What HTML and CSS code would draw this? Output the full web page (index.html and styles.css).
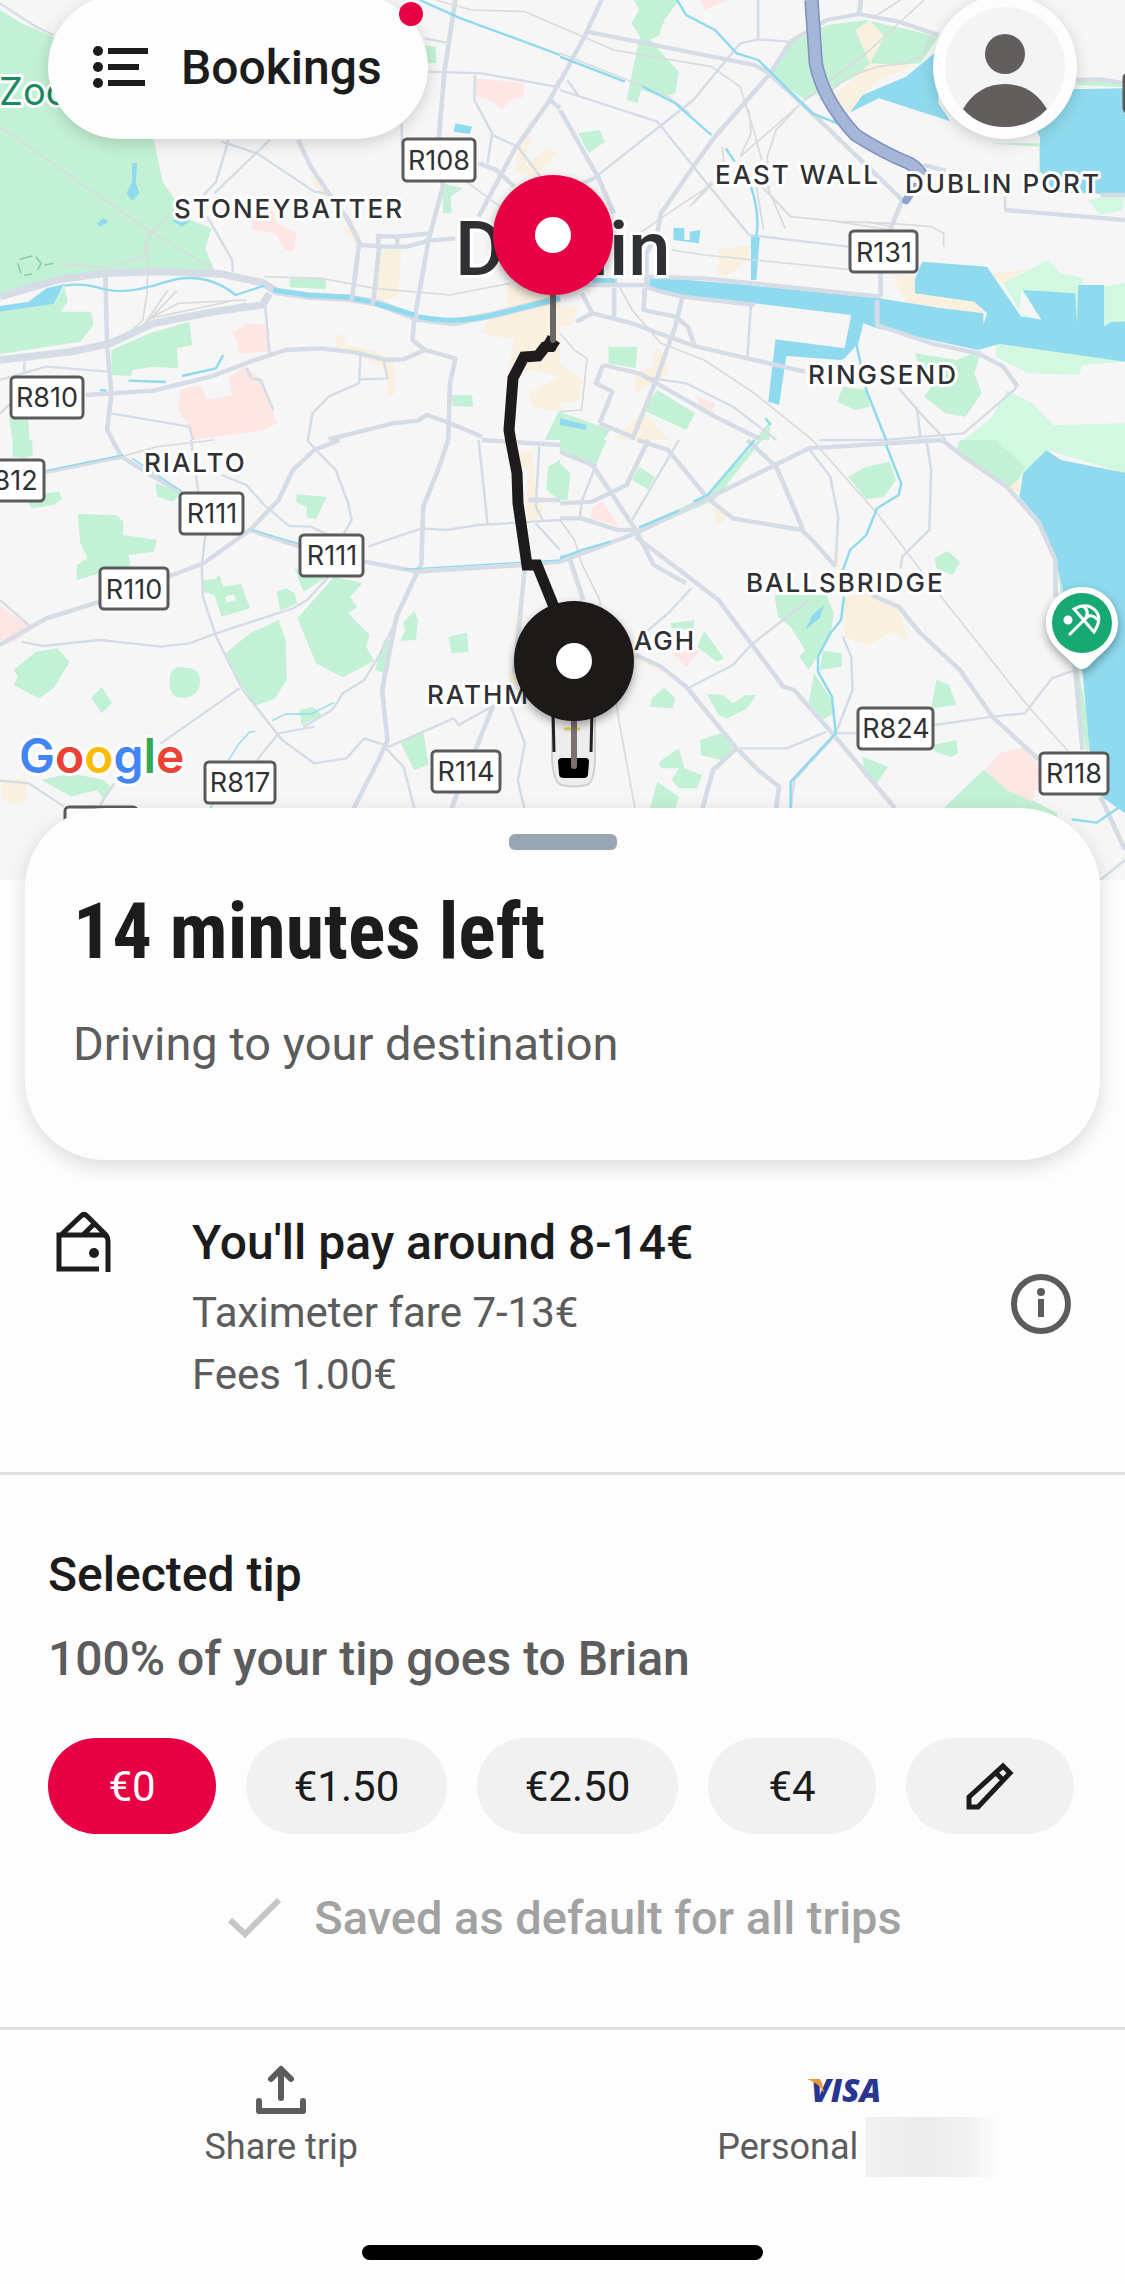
FILE: index.html
```html
<!DOCTYPE html>
<html lang="en">
<head>
<meta charset="utf-8">
<meta name="viewport" content="width=device-width, initial-scale=1">
<title>Your trip</title>
<link rel="stylesheet" href="styles.css">
</head>
<body>
<main class="trip">
  <section class="map" aria-label="Trip map">
    <svg class="map-canvas" viewBox="0 0 1125 880" preserveAspectRatio="xMidYMin slice" role="img" aria-label="Route through Dublin">
      <rect class="land" width="1125" height="880"/>

      <!-- north west -->
      <g transform="scale(.35714 .33333)">
        <path class="green" d="M0 30L60 70 150 110 250 300 430 415 455 545 485 590 510 650 592 685 575 745 600 812 300 815 160 840 0 885ZM180 860L190 905 170 935 255 935 262 975 225 1025 0 1062V935L150 912ZM312 1050L420 1000 530 965 538 1035 495 1045 500 1105 430 1100 370 1110 368 1128 312 1125ZM810 835L913 838 912 868 812 862ZM1180 135L1220 140 1222 190 1195 190ZM1240 550L1295 565 1262 590 1265 640 1240 640ZM1265 1185L1322 1185 1325 1220 1268 1218ZM25 1255L80 1260 82 1320 35 1320ZM1568 1225L1525 1320H1568Z"/>
        <path class="pink" d="M1330 235L1468 248 1465 290 1430 300 1405 328 1370 300 1335 290ZM705 655L760 625 775 670 830 700 822 755 800 750 770 700 705 690ZM650 1000L690 970 742 975 755 1055 665 1060 668 1030ZM505 1170L560 1155 580 1200 650 1185 640 1130 690 1100 735 1140 775 1270 740 1290 540 1320 525 1275 500 1230Z"/>
        <path class="sand" d="M1445 470L1480 360 1490 370 1470 500 1530 445 1560 460 1500 530 1445 520ZM1070 750L1125 748 1115 890 1045 910ZM1420 850L1568 880V1235L1490 1220 1480 1180 1568 1130 1500 1110 1440 1120 1415 1160 1440 1020 1350 1000 1370 950 1420 940ZM865 530L900 530 925 590 905 590ZM965 650L1010 700 1000 740 970 700ZM940 1005L960 1005 970 1035 1040 1050 1100 1075 1105 1185 1088 1185 1080 1110 1030 1080 940 1045Z"/>
        <path class="rail" d="M0 380L280 590 430 700 600 810M170 790L300 805 400 770 420 700 475 640M415 700L412 880 400 960 350 1010M400 980L470 870M400 980L495 872M410 960L500 910 690 900M420 970L690 910M420 955L640 905M740 830L900 835 1050 865 1260 885 1430 850M1220 0L1320 30 1470 35 1568 80M1300 540L1400 620"/>
        <path class="road minor" d="M0 10L100 80 150 105M640 420L605 545 570 585M755 420L600 580M620 425L720 460 880 575 915 580M580 650L650 780 652 815M1125 370V440M1190 115L1250 128M1200 215L1350 220 1568 262M1330 225L1328 300 1378 400 1365 490M1378 405L1450 440 1520 540M0 1140L130 1100 300 1115M68 1085V1120M310 1240L530 1280 540 1320M690 1105L705 1135 730 1140 765 1230M740 890L755 1060M1010 1060L1005 1150 920 1190 875 1240 862 1320M1005 1138L1085 1135 1075 1085M0 1240L60 1180"/>
        <path class="road" d="M1275 0L1245 210 1228 420 1240 560 1200 720 1160 960 1155 1020 1190 1050 1275 1075 1260 1150 1255 1320M835 420L870 500 920 580 975 660 1010 735 1070 740 1140 740 1200 722 1275 715M1060 740L1058 708 1110 710 1205 700M1112 710V740M1005 735L985 900M1062 740L1045 910M1568 240L1540 300 1440 450 1390 550 1340 650M1540 300L1568 325M1340 490L1390 510 1440 560M295 825L300 1040 312 1180 300 1290 315 1320M240 1185L430 1172 590 1130 700 1085 800 1050 900 1045 1000 1058 1080 1080 1130 1078 1190 1050M920 1318L1100 1270 1170 1262 1195 1245 1250 1265 1350 1310"/>
        <path class="road major" d="M0 890L160 840 290 820 450 815 620 822 735 848 775 875 860 888 980 895 1060 910 1170 955 1270 968 1380 945 1568 895M0 1080L200 1055 310 1030 430 970 600 935 735 915 755 880"/>
        <path class="water-line" d="M180 857Q230 848 290 867T460 847T660 885L740 857M360 1142L465 1146M510 1128L605 1105 625 1065M280 1170L298 1172M1175 0L1290 55 1430 110 1568 165"/>
        <path class="river" d="M765 870L860 885 980 892M990 896L1038 905M1050 910L1160 945M1172 950Q1280 975 1400 940L1568 895"/>
        <path class="water" d="M370 488L384 490 380 550 391 580 370 602 354 580 370 545ZM272 670L290 655 304 665 280 680ZM480 660H535L510 680ZM1275 370L1322 380 1315 402 1270 395ZM0 918L80 905 130 865 180 852 150 912 0 935Z"/>
        <path class="park-path" d="M55 778L90 768M100 770L115 790 105 810M50 790L58 820M68 826L90 822M125 795L150 790"/>
      </g>

      <!-- north east -->
      <g transform="translate(560 0) scale(.36033 .33333)">
        <path class="green" d="M205 0H330L290 60 275 105 250 120 300 180 330 215 320 280 290 290 225 270 215 310 185 300 210 165 222 110 198 70 220 30ZM50 400L110 390 125 425 80 460ZM580 220L640 130 740 75 850 60 1050 110 1000 190 880 200 760 260 680 300ZM1180 430H1335V520H1315V440L1185 435ZM135 1040H215L210 1105 135 1090ZM270 1170L375 1240 350 1290 230 1230ZM0 1235L140 1290 120 1320H0ZM785 1160L855 1170 860 1220 820 1230 770 1205ZM985 1060L1100 1080 1170 1050 1150 1120 1170 1180 1125 1250 1070 1240 1010 1190 1050 1130 1000 1110ZM540 1320L585 1260 580 1320ZM1430 255L1568 262V245H1440Z"/>
        <path class="mint" d="M1230 850L1290 815 1355 780 1390 820 1450 835 1450 870 1568 850V985L1530 970 1510 990 1290 960ZM1210 1030L1300 1040 1450 1060 1568 1085 1450 1095 1440 1125 1300 1120 1210 1070ZM1240 1170L1310 1210 1370 1275 1568 1270V1320H1120L1200 1250ZM1465 600L1568 580 1560 630 1500 645Z"/>
        <path class="sand" d="M820 90L860 60 900 110 860 190 985 195 880 240 800 340 760 290 860 190ZM440 745L530 738 520 780 465 830 440 825ZM920 820L985 830V880L1155 905 1175 940 1060 935 1050 920 960 910ZM1190 820L1290 810 1230 850ZM0 1090L60 1140 55 1200 0 1210ZM265 1040L290 1060 300 1120 210 1180 205 1120 260 1100ZM0 920H50L30 980H0ZM230 1230L300 1320H150Z"/>
        <path class="pink" d="M385 1190L430 1210 420 1245 380 1225ZM390 0H465L400 30Z"/>
        <path class="water" d="M800 345L840 285 960 230 1050 150V310L1090 375 885 295ZM1420 268L1568 265V585L1370 575 1332 510V410L1300 350ZM90 835H160L150 855 90 850ZM248 830L520 855 885 895 1060 925 1175 940 1175 975 1185 940 1150 905 985 880V838L1005 785 1185 800 1280 950 1335 958 1285 870 1430 880 1435 975 1438 855H1510V980L1530 965H1568V1085L1220 1032 1160 1050 880 985 842 970 828 1030 790 1075 780 1080 628 1068 608 1215 578 1205 598 1018 790 1045 808 945 540 910 400 900 248 862ZM315 683L345 685V720H360V695L390 690 385 730 315 720ZM530 705H555L545 840H530ZM0 1255L75 1275 70 1290 0 1275ZM895 330L900 348 888 345Z"/>
        <path class="land" d="M885 295L1100 370 1200 430 1330 440 1330 520 800 500 790 345ZM1280 870L1335 960 1275 940Z"/>
        <path class="rail" d="M0 80L150 150 420 200 500 260 540 400 560 480M0 160L200 245 300 290 360 340M1010 0L860 150 680 300 500 470M945 0L880 45M660 320L600 390 575 470 580 580 640 650 780 665 920 670 1030 680 1065 700V740M500 470L530 400 525 330M450 440L455 490M425 550L300 640 220 700M425 550L370 610M420 545L360 620M310 750L400 765 540 780 800 808M545 560L565 690M575 560L625 685M150 830L200 930 280 1030 400 1080 540 1180 700 1320M0 1000L40 1050 75 1075 60 1230 0 1235M560 560L640 650"/>
        <path class="road minor" d="M550 0L550 118 635 125M0 270L270 365 400 540 525 705 800 740M500 130L370 300 100 530M20 240L50 285M530 910L520 1075M500 130L550 118M1235 590V630M720 1320L900 1320 1120 1300 1260 1170 1270 1155M940 1165L1000 1240 1070 1320M990 1220L1000 1310M230 1130L350 1150 480 1220 600 1320"/>
        <path class="road" d="M115 0L70 105 0 245M75 95L540 195 580 220M640 125L580 225 430 410 370 500 280 640 270 700 240 760 240 860 M580 220L700 340 950 600 920 680 890 820 890 890M0 330L105 530 150 640M105 530L0 580M640 125L740 60 830 42 940 65 1050 105M830 42L835 0M1430 240L1500 238 1568 250M1235 630L1568 660M0 855H240M240 830L400 835 890 890M240 860L280 875 340 890 540 915M340 890L320 980 270 1130 200 1320M235 865L232 930 320 950M320 950L355 980 375 1040M60 880L90 940 200 970 300 1010 380 1040 680 1115M90 940L45 965M150 865V950M120 1095L100 1150 145 1175 110 1270M120 1095L220 1120 350 1200 430 1250 560 1320M110 1270L200 1310M880 900V975L1030 1030 1160 1060 1230 1100 1270 1160"/>
        <path class="rail" d="M720 300L800 230 880 200 960 190 1010 165 1028 105M770 665L920 690M850 665L920 680"/>
        <path class="water-line" d="M325 0L350 45 430 90 490 160 550 180 700 340 770 370 800 345M0 170L180 245M230 260L320 310 420 405M460 445L485 485M530 560Q555 640 545 710M820 1020L850 1170 905 1320M570 1255L585 1275"/>
        <path class="motorway-edge" d="M698 0Q705 110 710 190Q730 300 820 405Q900 460 970 490Q1000 510 1000 525"/>
        <path class="motorway" d="M698 0Q705 110 710 190Q730 300 820 405Q900 460 970 490Q1000 510 1000 525"/>
        <path class="motorway-end" d="M985 560L960 602"/>
        <path class="road" d="M1568 585H1500M1010 495L1070 512"/>
      </g>

      <!-- south west -->
      <g transform="translate(0 440) scale(.35714 .33333)">
        <path class="green" d="M35 0H90L92 45 70 55 35 50ZM80 190L120 160 165 155 175 175 150 195 90 205ZM435 130L510 155 485 185 440 170ZM217 222L325 225 345 245V285L440 300 430 335 360 345 365 380 280 400 215 420V375L245 355 225 310ZM830 163L915 170 885 238 858 232 860 200 830 188ZM565 420L600 418 615 405 625 440 675 432 700 505 620 530 600 465 570 455ZM775 455L800 445 825 460 833 490 785 512ZM825 385L910 415 850 455ZM935 410L1015 430 980 470 1000 500 975 520 1035 585 1025 620 1048 662 960 712 885 670 850 580 833 535ZM632 640L700 580 780 540 800 600 803 720 770 775 715 798 680 740ZM1160 512L1170 540 1165 600 1120 602 1135 570 1128 550ZM1255 590L1308 578 1312 635 1265 640ZM1075 600L1095 600 1075 700 1050 690ZM100 635L160 625 195 665 150 745 110 775 38 735 50 710 38 690ZM285 740L313 790 285 820 255 775ZM517 683Q560 683 560 725T517 773T475 725T517 683ZM838 810L875 800 903 825 845 855ZM1120 905L1185 875 1200 975 1160 990ZM115 1020L200 1000 290 1020 312 1040 290 1075 270 1050 200 1070ZM1568 60L1535 80 1530 150 1568 180Z"/>
        <path class="land" d="M630 470L655 462 660 480 635 488Z"/>
        <path class="pink" d="M0 495L90 565 45 605 0 610Z"/>
        <path class="sand" d="M5 1020L75 1015 70 1085 35 1095 5 1070ZM1405 50L1490 30 1500 140 1520 210 1500 240 1470 240 1480 90ZM1440 520H1450V790L1425 800V700L1440 690Z"/>
        <path class="rail" d="M340 50L440 20 600 0"/>
        <path class="road minor" d="M535 0L555 155M575 285L565 380 568 470 605 590 680 750 790 900 880 970 970 955 1020 895 1090 920M605 580L820 505 860 480 920 410M60 605L120 618 280 600 450 620 530 610 605 580M0 480L85 560M620 105L690 135 740 195 810 258 870 260 920 285M880 25L940 90 975 190 985 240 960 285M860 0L880 25M1030 320L1180 265 1250 270 1340 255 1568 240M670 745L450 910M880 860L780 880 720 960M850 860L930 810 960 760 1020 720 1060 650 1110 540M1090 920L1270 835 1285 855 1385 795M1430 800L1470 910 1450 1020 1468 1105M1080 925L1130 980 1160 1105M280 1095L320 1030M0 1022L80 1030 180 1100M1340 0L1365 250M1510 20L1500 200 1520 240M1500 250L1568 330"/>
        <path class="road" d="M315 0L340 50 430 110 520 165M0 98H120L340 50M0 615L80 565 130 535 280 485M470 410L570 370 700 270 780 180 820 90 880 30 950 0M700 270L840 320M1020 365L1170 395 1470 375 1568 365M1255 0L1230 80 1185 200 1180 370 1110 530 1070 750 1085 900 1060 960 990 1105M1470 380L1440 700M1380 800L1325 945M1280 1060L1265 1105M1350 0L1568 15M1480 180H1568"/>
        <path class="water-line thin" d="M130 92L345 45M370 55L510 155M705 270L840 312M1130 388L1568 360M762 842L800 822 870 822 935 788M640 960L670 910 700 875 715 875M588 1105L600 1085"/>
      </g>

      <!-- south east -->
      <g transform="translate(560 440) scale(.36033 .33333)">
        <path class="mint" d="M1110 0H1568V100L1350 30 1290 100Z"/>
        <path class="green" d="M1110 0H1210L1290 80 1260 150 1100 30ZM0 0H130L100 75 0 35ZM0 70L30 100 20 180 0 180ZM220 80L262 110 245 148 200 120ZM800 110L850 80 915 65 932 120 900 170 850 178ZM215 265L400 170 550 0 560 0 430 180 225 275ZM595 465L740 465 760 520 750 590 690 690 665 650 680 630 640 560 605 530ZM730 632L782 640V680L720 690ZM705 700L755 780 760 820 730 838 690 790ZM1040 355L1075 333 1110 365 1090 405 1045 385ZM400 573L455 655 435 665 380 620ZM305 550L372 540 370 570 310 565ZM288 743L320 775 312 805 250 800 255 775ZM408 762L450 765 480 790 515 765 545 765 520 805 465 835 440 825ZM1045 718L1080 735 1100 795 1030 805ZM390 900L460 875 480 930 445 960 390 945ZM1035 915L1100 900 1105 940 1085 950 1040 935ZM840 950L910 980 880 1030 845 1010ZM275 965L330 925 345 985 395 1005 380 1045 330 1045 310 1020 330 985 280 985ZM270 1025L330 1070 320 1105H250ZM1065 1105L1175 990 1250 1050 1310 1080 1380 1120V1150H1100ZM1380 390L1390 400 1480 930 1460 930Z"/>
        <path class="pink" d="M90 200L120 185 165 260 120 245 85 235ZM310 640L390 630 350 680ZM1178 990L1220 940 1290 920 1340 990 1310 1085 1240 1050Z"/>
        <path class="sand" d="M788 470L850 460 940 500 962 600 920 575 855 615 790 590ZM1250 140L1275 115 1280 165ZM425 200L470 225 435 260ZM750 335L775 345V400ZM200 640L290 680 280 695 205 660Z"/>
        <path class="water" d="M1285 100L1350 30 1390 60 1568 98V1120L1490 1060 1470 930 1450 700 1385 400 1330 240 1275 170ZM733 495L720 535 682 568 700 525Z"/>
        <path class="rail" d="M700 0L880 220 1050 460 1300 800 1440 970M0 240L40 300 60 370 110 480 165 850 208 1105"/>
        <path class="road minor" d="M330 0L200 240M60 185L55 235M60 185L100 75 0 35M0 350L50 340M690 25L750 110 772 230 765 370M1017 0L1030 90 1025 270 950 350 945 385M240 575L300 520 365 445M355 745L480 675 530 615 690 480M785 590L808 650 812 750 765 880 830 880M500 925L630 925 740 875M1040 855L1200 830 1290 820 1365 715 1430 690M760 890L650 1020M650 1020L640 1105M1568 1260L1500 1320"/>
        <path class="road" d="M0 35L90 75 140 155 210 270 260 375 350 430M245 0L185 135 90 185 0 190M215 0L300 30 410 175 480 235 670 270 700 300 765 380M520 0L600 80 675 270M410 175L690 25 1060 0M0 365L210 280 410 175M210 290L440 480 530 610 620 740 650 750 760 885 930 1105M0 235H60L160 270 210 270M25 350L65 480M210 645L280 680 350 740 490 925 550 990 608 1040 600 1105M490 925L425 990 395 1105M865 465L940 500 1000 580 1110 690 1200 830 1330 960M1060 0L1120 50 1240 140 1330 250 1375 360V470M1430 690L1450 930M1500 1070L1568 1230"/>
        <path class="water-line" d="M905 15L947 130 940 165 880 205 850 285 805 330 785 390M788 470L780 540 750 580 716 650V695L755 770 765 880 640 1025V1105M220 262L330 212M370 185L410 165 540 0M0 355L60 330 140 305M1420 1138L1490 1148 1520 1125 1568 1090"/>
      </g>

      <!-- place names -->
      <g class="place">
        <text x="174" y="218">STONEYBATTER</text>
        <text x="715" y="184">EAST WALL</text>
        <text x="905" y="193">DUBLIN PORT</text>
        <text x="808" y="384">RINGSEND</text>
        <text x="144" y="472">RIALTO</text>
        <text x="746" y="592">BALLSBRIDGE</text>
        <text x="427" y="704">RATHMINES</text>
        <text x="696" y="650" text-anchor="end">RANELAGH</text>
      </g>
      <text class="zoo" x="-1" y="105">Zoo</text>
      <text class="city" x="455" y="275">Dublin</text>

      <!-- road shields -->
      <g class="shield">
        <rect x="403" y="139" width="72" height="42" rx="4"/><text x="439" y="170">R108</text>
        <rect x="850" y="231" width="67" height="41" rx="4"/><text x="884" y="262">R131</text>
        <rect x="11" y="377" width="72" height="41" rx="4"/><text x="47" y="407">R810</text>
        <rect x="-28" y="460" width="72" height="41" rx="4"/><text x="7" y="490">R812</text>
        <rect x="180" y="493" width="63" height="41" rx="4"/><text x="212" y="523">R111</text>
        <rect x="300" y="535" width="63" height="41" rx="4"/><text x="332" y="565">R111</text>
        <rect x="100" y="568" width="68" height="41" rx="4"/><text x="134" y="599">R110</text>
        <rect x="205" y="762" width="70" height="41" rx="4"/><text x="240" y="792">R817</text>
        <rect x="432" y="751" width="68" height="41" rx="4"/><text x="466" y="781">R114</text>
        <rect x="858" y="708" width="75" height="41" rx="4"/><text x="896" y="738">R824</text>
        <rect x="1040" y="753" width="68" height="41" rx="4"/><text x="1074" y="783">R118</text>
        <rect x="65" y="807" width="72" height="41" rx="4"/>
        <rect x="1124" y="74" width="60" height="38" rx="4"/>
      </g>

      <text class="google" x="19" y="773"><tspan fill="#4285f4">G</tspan><tspan fill="#ea4335">o</tspan><tspan fill="#fbbc05">o</tspan><tspan fill="#4285f4">g</tspan><tspan fill="#34a853">l</tspan><tspan fill="#ea4335">e</tspan></text>

      <!-- beach marker -->
      <g class="marker">
        <path fill="#fff" d="M1082 587C1102 587 1118 603 1118 623C1118 643 1104 650 1090 665Q1082 673 1074 665C1060 650 1046 643 1046 623C1046 603 1062 587 1082 587Z"/>
        <circle cx="1082" cy="623" r="30" fill="#18a872"/>
        <g fill="none" stroke="#fff" stroke-width="3">
          <circle cx="1068" cy="620" r="3" fill="#fff"/>
          <path d="M1069 635L1088 616"/>
          <path d="M1074 609Q1087 602 1095 610T1094 632Z"/>
          <path d="M1083 606Q1091 612 1084 620M1098 620Q1090 612 1085 619"/>
        </g>
      </g>

      <!-- car and route -->
      <path fill="#ededed" stroke="#cfcfcf" stroke-width="2" d="M552 700V760Q554 784 562 785Q574 788 586 785Q594 784 595 760V700Z"/>
      <path fill="none" stroke="#222" stroke-width="3" d="M553 710L554 752M592 710L591 752"/>
      <path stroke="#e2cf4b" stroke-width="3" d="M564 729H580"/>
      <path d="M558 762Q558 758 562 758H586Q589 758 589 762L588 774Q588 778 584 778H564Q559 778 559 774Z"/>
      <path class="route" d="M555 345L545 347 538 356 524 357 513 378 509 430 511 442 517 473 518 503 527 565 537 565 556 612"/>
      <path fill="#1d1b1b" d="M548 335L560 343 554 352 538 352Z"/>
      <path stroke="#666" stroke-width="6" stroke-linecap="round" d="M553 290V340"/>
      <path stroke="#7c7071" stroke-width="6" stroke-linecap="round" d="M574 715V766"/>
      <g class="marker">
        <circle cx="553" cy="235" r="60" fill="#e80045"/>
        <circle cx="574" cy="661" r="60" fill="#1d1918"/>
      </g>
      <circle cx="553" cy="235" r="18" fill="#fff"/>
      <circle cx="574" cy="661" r="18" fill="#fff"/>
    </svg>

    <header class="topbar">
      <button class="bookings" type="button">
        <svg width="56" height="42" viewBox="0 0 56 42" aria-hidden="true">
          <g fill="#1c1c1c"><circle cx="5" cy="5" r="5"/><circle cx="5" cy="21" r="5"/><circle cx="5" cy="37" r="5"/><path d="M15 2H55V8H15ZM15 18H46V24H15ZM15 34H52V40H15Z"/></g>
        </svg>
        Bookings
        <span class="badge"></span>
      </button>
      <button class="avatar" type="button" aria-label="Profile">
        <svg width="144" height="144" viewBox="0 0 144 144" aria-hidden="true">
          <circle cx="72" cy="72" r="60" fill="#f4f4f4"/>
          <g fill="#625e5e"><circle cx="72" cy="59" r="20"/><path d="M30 114Q45 89 72 89T114 114Q98 132 72 132T30 114Z"/></g>
        </svg>
      </button>
    </header>
  </section>

  <section class="card">
    <div class="handle"></div>
    <h1 class="eta">14 minutes left</h1>
    <p class="status">Driving to your destination</p>
  </section>

  <section class="fare">
    <svg class="wallet" width="58" height="64" viewBox="0 0 58 64" fill="none" stroke="#1c1c1c" stroke-width="5" aria-hidden="true">
      <path d="M44 58H4V24H48Q53 24 53 30V61M7 23L26 5Q29 2 32 5L52 25M28 24L40 12"/>
      <circle cx="39" cy="42" r="5" fill="#1c1c1c" stroke="none"/>
    </svg>
    <div class="fare-text">
      <h2 class="title">You'll pay around 8-14€</h2>
      <p class="detail">Taximeter fare 7-13€</p>
      <p class="detail">Fees 1.00€</p>
    </div>
    <button class="info" type="button" aria-label="Fare details">
      <svg width="60" height="60" viewBox="0 0 60 60" aria-hidden="true">
        <circle cx="30" cy="30" r="27" fill="none" stroke="#5c5c5c" stroke-width="6"/>
        <circle cx="30" cy="18" r="4" fill="#5c5c5c"/><path d="M27 25H33V43H27Z" fill="#5c5c5c"/>
      </svg>
    </button>
  </section>

  <section class="tip">
    <h2 class="title">Selected tip</h2>
    <p class="tip-note">100% of your tip goes to Brian</p>
    <div class="pills">
      <button class="pill selected" type="button">€0</button>
      <button class="pill" type="button">€1.50</button>
      <button class="pill" type="button">€2.50</button>
      <button class="pill" type="button">€4</button>
      <button class="pill" type="button" aria-label="Enter another tip">
        <svg width="48" height="48" viewBox="0 0 48 48" fill="none" stroke="#1c1c1c" stroke-width="5" aria-hidden="true"><path d="M3 45V35L37 4L44 11L12 45ZM30 11L37 18"/></svg>
      </button>
    </div>
    <p class="saved">
      <svg width="54" height="42" viewBox="0 0 54 42" fill="none" stroke="#c6c6c6" stroke-width="6" aria-hidden="true"><path d="M2 23L17 37L51 3"/></svg>
      Saved as default for all trips
    </p>
  </section>

  <nav class="actions">
    <button class="action" type="button">
      <svg width="50" height="50" viewBox="0 0 50 50" fill="none" stroke="#5c5c5c" stroke-width="6" stroke-linecap="round" stroke-linejoin="round" aria-hidden="true"><path d="M3 36V46H47V36M25 33V5M15 14L25 4L35 14"/></svg>
      <span>Share trip</span>
    </button>
    <button class="action" type="button">
      <svg width="74" height="50" viewBox="0 0 74 50" role="img" aria-label="Visa">
        <text class="visa" x="4" y="37">VISA</text>
        <path fill="#e9983b" d="M0 14H10Q14 14 15 18L17 28Q12 18 0 14Z"/>
      </svg>
      <span class="account">Personal <span class="redacted"></span></span>
    </button>
  </nav>
  <div class="home-indicator"></div>
</main>
</body>
</html>
```
FILE: styles.css
```css
* { box-sizing: border-box; }

body {
  margin: 0;
  background: #fdfdfd;
  color: #1c1c1c;
  font-family: Roboto, "Liberation Sans", sans-serif;
}

h1, h2, p { margin: 0; }

button {
  padding: 0;
  border: 0;
  background: none;
  color: inherit;
  font: inherit;
  cursor: pointer;
}

svg { display: block; flex: none; }

.trip { overflow: hidden; }

/* Map */
.map { position: relative; height: 880px; overflow: hidden; }
.map-canvas { width: 100%; height: 100%; }
.land { fill: #f6f6f6; }
.green { fill: #c3f1d5; }
.mint { fill: #d3f8e2; }
.pink { fill: #fde6e4; }
.sand { fill: #f9f0df; }
.water { fill: #8fdaee; }
.road, .rail, .water-line, .river, .motorway, .motorway-edge, .motorway-end, .park-path, .route { fill: none; stroke-linejoin: round; }
.road { stroke: #d5dce5; stroke-width: 13; }
.minor { stroke-width: 7; }
.major { stroke-width: 22; }
.rail { stroke: #dadbdd; stroke-width: 5; }
.water-line { stroke: #8fdaee; stroke-width: 7; }
.thin { stroke-width: 4; }
.river { stroke: #8fdaee; stroke-width: 15; }
.motorway-edge { stroke: #7f93bf; stroke-width: 40; }
.motorway { stroke: #a5b6d8; stroke-width: 31; }
.motorway-end { stroke: #8fa2ca; stroke-width: 22; stroke-linecap: round; }
.park-path { stroke: #7fcba3; stroke-width: 4; }
.route { stroke: #1d1b1b; stroke-width: 11; stroke-linejoin: miter; }
.marker { filter: drop-shadow(0 4px 5px rgba(0, 0, 0, .35)); }

.place text, .zoo, .city, .google {
  font-family: Inter, "Liberation Sans", sans-serif;
  fill: #2f3134;
  stroke: #fff;
  stroke-width: 6px;
  stroke-linejoin: round;
  paint-order: stroke;
}
.place text { font-size: 26px; font-weight: 500; letter-spacing: 2px; }
.zoo { font-size: 38px; fill: #1b8a61; }
.city { font-size: 76px; font-family: Roboto, sans-serif; font-weight: 500; }
.google { font-size: 48px; font-weight: 600; }
.shield rect { fill: #fff; stroke: #5b5b5b; stroke-width: 3px; }
.shield text { font: 27px Inter, "Liberation Sans", sans-serif; fill: #2f3134; text-anchor: middle; }

/* Controls over the map */
.topbar {
  position: absolute;
  inset: -5px 48px auto;
  display: flex;
  justify-content: space-between;
}
.bookings {
  position: relative;
  display: flex;
  align-items: center;
  gap: 32px;
  width: 380px;
  height: 144px;
  padding-left: 45px;
  border-radius: 72px;
  background: #fdfdfd;
  box-shadow: 0 4px 16px rgba(0, 0, 0, .16);
  font-size: 48px;
  font-weight: 500;
}
.badge {
  position: absolute;
  top: 7px;
  right: 5px;
  width: 24px;
  height: 24px;
  border-radius: 50%;
  background: #e80045;
}
.avatar {
  border-radius: 50%;
  background: #fdfdfd;
  box-shadow: 0 4px 16px rgba(0, 0, 0, .16);
}

/* Trip status */
.card {
  position: relative;
  height: 352px;
  margin: -72px 25px 0;
  padding: 26px 48px 0;
  border-radius: 80px;
  background: #fdfdfd;
  box-shadow: 0 6px 20px rgba(0, 0, 0, .14);
}
.handle {
  width: 108px;
  height: 16px;
  margin: 0 auto;
  border-radius: 6px;
  background: #9aa5b3;
}
.eta {
  margin-top: 34px;
  font: 700 78px/96px "Roboto Condensed", "Liberation Sans Narrow", Roboto, sans-serif;
}
.status {
  margin-top: 34px;
  color: #5c5c5c;
  font-size: 47px;
  line-height: 60px;
}

/* Fare */
.fare {
  display: flex;
  align-items: flex-start;
  padding: 51px 54px 66px 55px;
  border-bottom: 3px solid #e0e0e0;
}
.fare-text { flex: 1; }
.wallet { margin-right: 79px; }
.title { font-size: 48px; font-weight: 500; line-height: 64px; }
.fare .title { margin-bottom: 7px; }
.detail { color: #5c5c5c; font-size: 42px; line-height: 62px; }
.info { margin-top: 63px; }

/* Tip */
.tip { padding: 68px 51px 77px 48px; border-bottom: 3px solid #e0e0e0; }
.tip-note {
  margin-top: 20px;
  color: #5c5c5c;
  font-size: 48px;
  font-weight: 500;
  line-height: 64px;
}
.pills { display: flex; gap: 30px; margin-top: 47px; }
.pill {
  display: flex;
  align-items: center;
  justify-content: center;
  flex: 168 1 0;
  height: 96px;
  border-radius: 48px;
  background: #f1f1f1;
  font-size: 42px;
}
.pill:nth-child(2), .pill:nth-child(3) { flex-grow: 201; }
.selected { background: #e80045; color: #fff; }
.saved {
  display: flex;
  align-items: center;
  justify-content: center;
  gap: 32px;
  margin: 52px 0 0 8px;
  color: #a2a2a2;
  font-size: 47px;
  font-weight: 500;
  line-height: 64px;
}

/* Bottom actions */
.actions { display: grid; grid-template-columns: 1fr 1fr; padding-top: 35px; }
.action {
  display: flex;
  flex-direction: column;
  align-items: center;
  gap: 8px;
  color: #5c5c5c;
  font-size: 36px;
  line-height: 48px;
}
.visa { font: italic 800 32px "Open Sans", sans-serif; fill: #2a3590; }
.account { display: flex; align-items: center; gap: 8px; }
.redacted {
  width: 134px;
  height: 60px;
  margin: -6px -30px -6px 0;
  background: linear-gradient(90deg, #f1f1f1, #ececec 45%, #f1f1f1 75%, #fdfdfd);
}
.home-indicator {
  width: 401px;
  max-width: 60%;
  height: 15px;
  margin: 74px auto 25px;
  border-radius: 8px;
  background: #000;
}
```
